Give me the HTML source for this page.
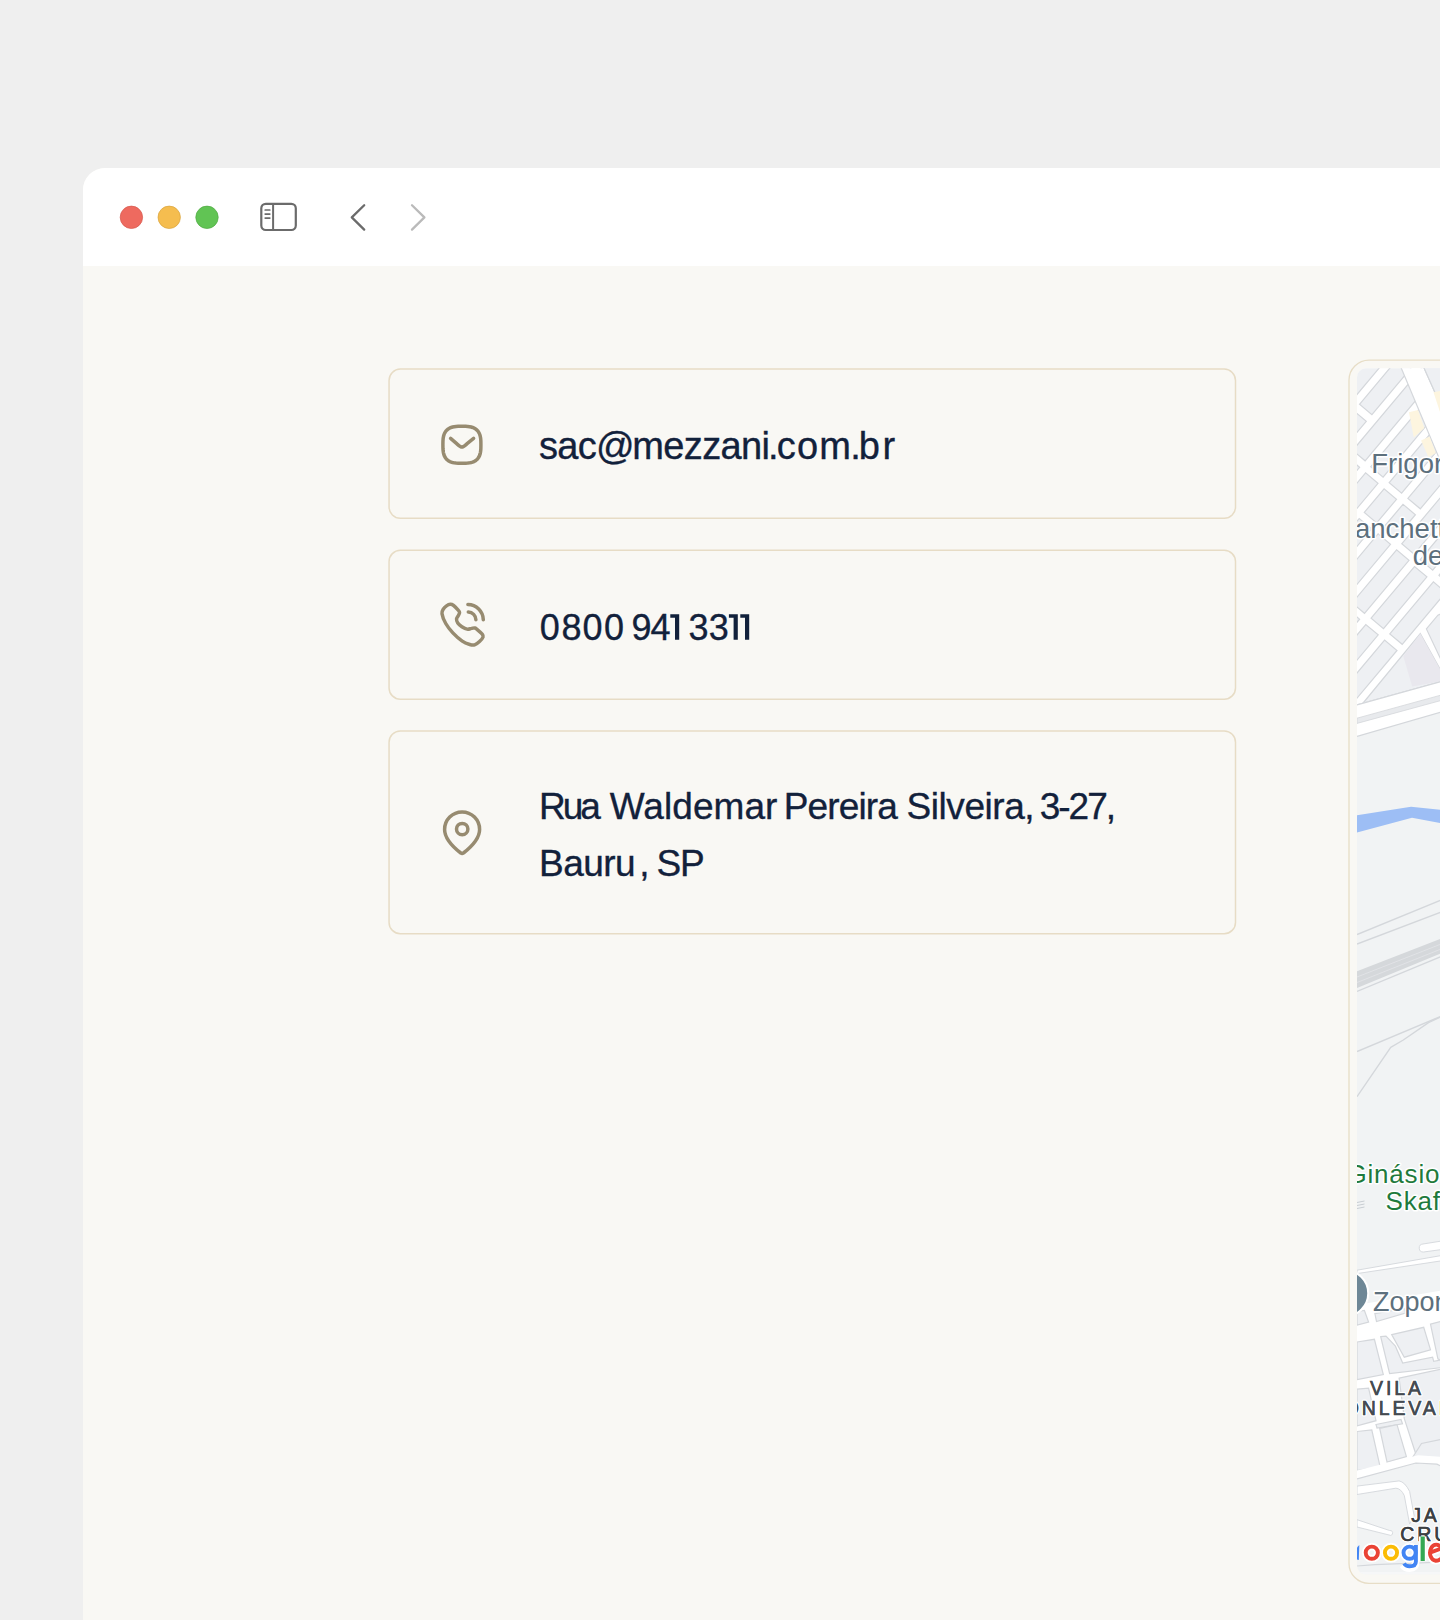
<!DOCTYPE html>
<html>
<head>
<meta charset="utf-8">
<style>
html,body{margin:0;padding:0;}
body{width:1440px;height:1620px;overflow:hidden;background:#efefef;position:relative;font-family:"Liberation Sans",sans-serif;}
.win{position:absolute;left:82.5px;top:168px;width:1400px;height:1500px;background:#f9f8f4;border-radius:22px 0 0 0;overflow:hidden;}
.bar{position:absolute;left:0;top:0;right:0;height:97.8px;background:#ffffff;}
svg{position:absolute;left:0;top:0;}
</style>
</head>
<body>
<div class="win"><div class="bar"></div></div>

<svg width="1440" height="1620" viewBox="0 0 1440 1620">
  <!-- cards -->
  <g fill="none" stroke="#e7dcc5" stroke-width="1.5">
    <rect x="389.06" y="369.1" width="846.44" height="149.2" rx="11.3" ry="11.3"/>
    <rect x="389.06" y="550.3" width="846.44" height="148.9" rx="11.3" ry="11.3"/>
    <rect x="389.06" y="731.0" width="846.44" height="202.7" rx="11.3" ry="11.3"/>
  </g>
  <!-- traffic lights -->
  <circle cx="131.4" cy="217.3" r="11.2" fill="#ee6a5f" stroke="#d5574c" stroke-width="0.7"/>
  <circle cx="169.2" cy="217.3" r="11.2" fill="#f5bd4f" stroke="#d9a33c" stroke-width="0.7"/>
  <circle cx="207" cy="217.3" r="11.2" fill="#61c454" stroke="#4fa942" stroke-width="0.7"/>
  <!-- sidebar icon -->
  <rect x="261.3" y="203.8" width="34.5" height="26.2" rx="4.5" fill="none" stroke="#6b6b6b" stroke-width="2.2"/>
  <line x1="273.1" y1="204" x2="273.1" y2="230" stroke="#6b6b6b" stroke-width="2"/>
  <line x1="265.2" y1="210" x2="269.8" y2="210" stroke="#6b6b6b" stroke-width="1.7" stroke-linecap="round"/>
  <line x1="265.2" y1="214.1" x2="269.8" y2="214.1" stroke="#6b6b6b" stroke-width="1.7" stroke-linecap="round"/>
  <line x1="265.2" y1="218.1" x2="269.8" y2="218.1" stroke="#6b6b6b" stroke-width="1.7" stroke-linecap="round"/>
  <!-- chevrons -->
  <polyline points="364.2,205.2 351.8,217.4 364.2,229.6" fill="none" stroke="#6b6b6b" stroke-width="2.3" stroke-linecap="round" stroke-linejoin="round"/>
  <polyline points="412,205.2 424.4,217.4 412,229.6" fill="none" stroke="#bababa" stroke-width="2.3" stroke-linecap="round" stroke-linejoin="round"/>
  <!-- icons -->
  <g fill="none" stroke="#978b70" stroke-width="3.5" stroke-linecap="round" stroke-linejoin="round">
    <path d="M480.90 444.80 L480.85 448.44 L480.71 450.56 L480.47 452.31 L480.13 453.85 L479.69 455.22 L479.16 456.45 L478.53 457.57 L477.81 458.58 L476.98 459.48 L476.05 460.29 L475.02 461.00 L473.87 461.61 L472.60 462.13 L471.19 462.55 L469.62 462.88 L467.81 463.11 L465.63 463.25 L461.90 463.30 L458.17 463.25 L455.99 463.11 L454.18 462.88 L452.61 462.55 L451.20 462.13 L449.93 461.61 L448.78 461.00 L447.75 460.29 L446.82 459.48 L445.99 458.58 L445.27 457.57 L444.64 456.45 L444.11 455.22 L443.67 453.85 L443.33 452.31 L443.09 450.56 L442.95 448.44 L442.90 444.80 L442.95 441.16 L443.09 439.04 L443.33 437.29 L443.67 435.75 L444.11 434.38 L444.64 433.15 L445.27 432.03 L445.99 431.02 L446.82 430.12 L447.75 429.31 L448.78 428.60 L449.93 427.99 L451.20 427.47 L452.61 427.05 L454.18 426.72 L455.99 426.49 L458.17 426.35 L461.90 426.30 L465.63 426.35 L467.81 426.49 L469.62 426.72 L471.19 427.05 L472.60 427.47 L473.87 427.99 L475.02 428.60 L476.05 429.31 L476.98 430.12 L477.81 431.02 L478.53 432.03 L479.16 433.15 L479.69 434.38 L480.13 435.75 L480.47 437.29 L480.71 439.04 L480.85 441.16 Z"/>
    <path d="M450.6 438.4 L456.4 443.4 C459.4 446.0 460.4 447.0 461.9 447.0 C463.4 447.0 464.4 446.0 467.4 443.4 L473.6 438.4"/>
    <path d="M450.25 604.37 C451.44 604.31 452.37 604.62 453.62 605.50 C454.87 606.37 456.76 608.47 457.75 609.62 C458.74 610.78 459.46 611.44 459.55 612.44 C459.64 613.44 458.81 614.53 458.31 615.62 C457.81 616.72 456.64 617.75 456.55 619.00 C456.46 620.25 456.86 621.84 457.75 623.12 C458.64 624.41 460.31 625.69 461.87 626.69 C463.44 627.69 465.50 628.84 467.12 629.12 C468.75 629.41 470.31 628.56 471.62 628.37 C472.94 628.19 474.00 627.75 475.00 628.00 C476.00 628.25 476.44 628.87 477.62 629.87 C478.81 630.87 481.22 632.81 482.12 634.00 C483.03 635.19 483.50 635.75 483.06 637.00 C482.62 638.25 480.91 640.19 479.50 641.50 C478.09 642.81 476.25 644.37 474.62 644.87 C473.00 645.37 471.81 645.12 469.75 644.50 C467.69 643.87 465.06 643.06 462.25 641.12 C459.44 639.19 455.62 635.81 452.87 632.87 C450.12 629.94 447.56 626.69 445.75 623.50 C443.94 620.31 442.37 616.19 442.00 613.75 C441.62 611.31 442.75 610.19 443.50 608.87 C444.25 607.56 445.37 606.62 446.50 605.87 C447.62 605.12 449.06 604.44 450.25 604.37 Z"/>
    <path d="M467.9 604.5 A15.6 15.6 0 0 1 483.3 619.8"/>
    <path d="M468.3 612.1 A7.7 7.7 0 0 1 475.9 619.8"/>
    <path d="M479.6 829.4 C479.6 839.4 467.48 849.8 463.41 853 Q462.1 854.1 460.79 853 C456.72 849.8 444.6 839.4 444.6 829.4 A17.5 17.5 0 0 1 479.6 829.4 Z"/>
    <circle cx="462.2" cy="829.1" r="5.7"/>
  </g>
</svg>
<!-- TEXT START -->
<svg width="1440" height="1620" viewBox="0 0 1440 1620" style="position:absolute;left:0;top:0;">
<g font-family="Liberation Sans" font-size="36" fill="#12213b" stroke="#12213b" stroke-width="0.35">
<text x="538.99" y="458.6" font-size="38" letter-spacing="-0.648">sac</text>
<text x="595.98" y="458.6" font-size="38">@</text>
<text x="632.3" y="458.6" font-size="38" letter-spacing="-0.625">mezzani</text>
<text x="767.99" y="458.6" font-size="38">.</text>
<text x="776.81" y="458.6" font-size="38" letter-spacing="1.21">com</text>
<text x="850.19" y="458.6" font-size="38">.</text>
<text x="858.77" y="458.6" font-size="38" letter-spacing="2.657">br</text>
<text x="539.11" y="818.8" font-size="37" letter-spacing="-3.047">Rua</text>
<text x="609.69" y="818.8" font-size="37" letter-spacing="0.066">Waldemar</text>
<text x="783.81" y="818.8" font-size="37" letter-spacing="-0.881">Pereira</text>
<text x="906.58" y="818.8" font-size="37" letter-spacing="-0.45">Silveira,</text>
<text x="1039.66" y="818.8" font-size="37" letter-spacing="-1.967">3-27,</text>
<text x="539.01" y="875.7" font-size="37" letter-spacing="-0.532">Bauru</text>
<text x="639.19" y="875.7" font-size="37">,</text>
<text x="656.38" y="875.7" font-size="37" letter-spacing="-1.149">SP</text>
<text x="539.8" y="639.8" font-size="36">0</text>
<text x="561.4" y="639.8" font-size="36">8</text>
<text x="582.6" y="639.8" font-size="36">0</text>
<text x="604.0" y="639.8" font-size="36">0</text>
<text x="631.45" y="639.8" font-size="36">9</text>
<text x="650.44" y="639.8" font-size="36">4</text>
<text x="688.57" y="639.8" font-size="36">3</text>
<text x="708.67" y="639.8" font-size="36">3</text>
<path d="M670.30 614.2 H679.20 V639.7 H675.00 V617.8 H670.30 Z" stroke="none"/>
<path d="M728.90 614.2 H737.80 V639.7 H733.60 V617.8 H728.90 Z" stroke="none"/>
<path d="M740.30 614.2 H749.20 V639.7 H745.00 V617.8 H740.30 Z" stroke="none"/>
</g>
</svg>
<!-- TEXT END -->
<!-- MAP START -->
<svg width="1440" height="1620" viewBox="0 0 1440 1620" style="position:absolute;left:0;top:0;font-family:'Liberation Sans',sans-serif;">
<defs>
<clipPath id="mapclip"><rect x="1357" y="368.3" width="120" height="1206.1" rx="9" ry="9"/></clipPath>
<clipPath id="upclip"><polygon points="1357,368 1445,368 1445,680.6 1357,704.8"/></clipPath>
</defs>
<rect x="1349" y="360.1" width="150" height="1223.3" rx="20" ry="20" fill="none" stroke="#e7ddc6" stroke-width="1.3"/>
<g clip-path="url(#mapclip)">
<rect x="1357.0" y="368.3" width="88.0" height="1206.1000000000001" fill="#f1f3f4"/>
<polygon points="1357,368 1445,368 1445,680.6 1357,704.8" fill="#ffffff"/>
<g clip-path="url(#upclip)">
<polygon points="1312.4,422.4 1428.1,284.5 1440.5,295.0 1324.8,432.8" fill="#eef0f3" stroke="#d4d7db" stroke-width="1.2" />
<polygon points="1318.2,453.4 1353.9,410.9 1366.3,421.3 1330.7,463.9" fill="#eef0f3" stroke="#d4d7db" stroke-width="1.2" />
<polygon points="1359.5,404.3 1446.8,300.2 1459.2,310.6 1371.9,414.7" fill="#eef0f3" stroke="#d4d7db" stroke-width="1.2" />
<polygon points="1298.4,515.1 1347.2,456.9 1359.6,467.3 1310.8,525.5" fill="#eef0f3" stroke="#d4d7db" stroke-width="1.2" />
<polygon points="1352.7,450.4 1465.5,315.9 1477.9,326.3 1365.1,460.8" fill="#eef0f3" stroke="#d4d7db" stroke-width="1.2" />
<polygon points="1317.1,530.8 1365.6,472.9 1378.0,483.3 1329.5,541.2" fill="#eef0f3" stroke="#d4d7db" stroke-width="1.2" />
<polygon points="1370.7,466.8 1484.2,331.6 1496.6,342.0 1383.1,477.2" fill="#eef0f3" stroke="#d4d7db" stroke-width="1.2" />
<polygon points="1335.8,546.5 1359.2,518.5 1371.6,528.9 1348.2,556.9" fill="#eef0f3" stroke="#d4d7db" stroke-width="1.2" />
<polygon points="1364.3,512.4 1384.1,488.8 1396.5,499.3 1376.7,522.9" fill="#eef0f3" stroke="#d4d7db" stroke-width="1.2" />
<polygon points="1389.2,482.7 1502.9,347.3 1515.3,357.7 1401.6,493.1" fill="#eef0f3" stroke="#d4d7db" stroke-width="1.2" />
<polygon points="1341.6,577.5 1378.1,533.9 1390.5,544.4 1354.0,587.9" fill="#eef0f3" stroke="#d4d7db" stroke-width="1.2" />
<polygon points="1383.1,528.0 1403.0,504.3 1415.4,514.7 1395.5,538.5" fill="#eef0f3" stroke="#d4d7db" stroke-width="1.2" />
<polygon points="1407.9,498.4 1521.6,363.0 1534.0,373.4 1420.3,508.8" fill="#eef0f3" stroke="#d4d7db" stroke-width="1.2" />
<polygon points="1302.4,662.1 1347.2,608.8 1359.6,619.2 1314.8,672.5" fill="#eef0f3" stroke="#d4d7db" stroke-width="1.2" />
<polygon points="1352.1,602.9 1396.6,549.9 1409.0,560.3 1364.5,613.3" fill="#eef0f3" stroke="#d4d7db" stroke-width="1.2" />
<polygon points="1401.7,543.8 1540.3,378.6 1552.7,389.1 1414.1,554.2" fill="#eef0f3" stroke="#d4d7db" stroke-width="1.2" />
<polygon points="1321.1,677.8 1365.8,624.5 1378.2,634.9 1333.5,688.2" fill="#eef0f3" stroke="#d4d7db" stroke-width="1.2" />
<polygon points="1371.1,618.2 1414.5,566.5 1426.9,576.9 1383.5,628.7" fill="#eef0f3" stroke="#d4d7db" stroke-width="1.2" />
<polygon points="1420.2,559.6 1559.0,394.3 1571.4,404.7 1432.7,570.1" fill="#eef0f3" stroke="#d4d7db" stroke-width="1.2" />
<polygon points="1339.8,693.5 1384.6,640.1 1397.0,650.5 1352.2,703.9" fill="#eef0f3" stroke="#d4d7db" stroke-width="1.2" />
<polygon points="1389.8,633.9 1433.4,581.9 1445.8,592.3 1402.2,644.3" fill="#eef0f3" stroke="#d4d7db" stroke-width="1.2" />
<polygon points="1438.9,575.3 1577.6,410.0 1590.1,420.4 1451.3,585.7" fill="#eef0f3" stroke="#d4d7db" stroke-width="1.2" />
<polygon points="1397.0,358.0 1419.6,358.0 1445.0,414.9 1445.0,472.2" fill="#ffffff" stroke="none" stroke-width="0" />
<polyline points="1397.0,358.0 1445.0,472.2" fill="none" stroke="#d4d7db" stroke-width="1.2" stroke-linejoin="round"/>
<polyline points="1419.6,358.0 1445.0,414.9" fill="none" stroke="#d4d7db" stroke-width="1.2" stroke-linejoin="round"/>
<polygon points="1419.6,358.0 1445.0,358.0 1445.0,414.9" fill="#eef0f3" stroke="#d4d7db" stroke-width="1.2" />
<polygon points="1362.3,704.0 1420.3,633.6 1445.0,677.9 1445.0,680.6 1357.0,704.8" fill="#eef0f3" stroke="#d4d7db" stroke-width="1.2" />
<polygon points="1403.3,656.2 1420.3,633.6 1445.0,677.9 1445.0,680.6 1412.2,686.5" fill="#e9e8ee" stroke="none" stroke-width="0" />
<polygon points="1426.4,628.9 1437.9,615.2 1445.0,612.0 1445.0,668.3" fill="#eef0f3" stroke="#d4d7db" stroke-width="1.2" />
<polygon points="1409.0,412.2 1418.0,410.1 1424.3,428.0 1413.8,437.4" fill="#fdf5df" stroke="none" stroke-width="0" />
<polygon points="1421.1,440.6 1429.5,436.4 1435.8,453.1 1428.5,457.3" fill="#fdf5df" stroke="none" stroke-width="0" />
<polygon points="1433.5,392.3 1445.0,390.0 1445.0,412.0 1440.0,412.0" fill="#fdf5df" stroke="none" stroke-width="0" />
</g>
<polygon points="1357.0,704.8 1445.0,680.6 1445.0,711.0 1357.0,736.3" fill="#ffffff" stroke="none" stroke-width="0" />
<polyline points="1357.0,704.8 1445.0,680.6" fill="none" stroke="#d4d7db" stroke-width="1.2" stroke-linejoin="round"/>
<polyline points="1357.0,736.3 1445.0,711.0" fill="none" stroke="#d4d7db" stroke-width="1.2" stroke-linejoin="round"/>
<polygon points="1357.0,718.2 1445.0,694.0 1445.0,699.4 1357.0,723.4" fill="#e8eaed" stroke="#d4d7db" stroke-width="0.8" />
<polygon points="1357.0,815.3 1411.0,806.7 1445.0,810.2 1445.0,823.8 1412.0,817.8 1357.0,832.5" fill="#9dbef5" stroke="none" stroke-width="0" />
<polyline points="1357.0,934.6 1445.0,898.5" fill="none" stroke="#d4d7db" stroke-width="1.4" stroke-linejoin="round"/>
<polyline points="1357.0,944.0 1445.0,910.5" fill="none" stroke="#d4d7db" stroke-width="1.4" stroke-linejoin="round"/>
<polygon points="1357.0,971.3 1445.0,937.0 1445.0,951.8 1357.0,988.1" fill="#d5d8db" stroke="none" stroke-width="0" />
<polyline points="1357.0,977.0 1445.0,942.5" fill="none" stroke="#e3e5e8" stroke-width="0.8" stroke-linejoin="round"/>
<polyline points="1357.0,982.5 1445.0,947.5" fill="none" stroke="#e3e5e8" stroke-width="0.8" stroke-linejoin="round"/>
<polyline points="1357.0,991.4 1445.0,955.0" fill="none" stroke="#d4d7db" stroke-width="1.4" stroke-linejoin="round"/>
<polyline points="1357.0,1051.6 1445.0,1014.6" fill="none" stroke="#d4d7db" stroke-width="1.4" stroke-linejoin="round"/>
<polyline points="1357.0,1096.7 1390.7,1047.3 1403.3,1040.0 1428.5,1022.7 1445.0,1015.0" fill="none" stroke="#d4d7db" stroke-width="1.4" stroke-linejoin="round"/>
<path d="M1445 1240.5 L1423 1244 A4 4 0 0 0 1423.5 1252 L1445 1249.1" fill="#ffffff" stroke="#d4d7db" stroke-width="0.9"/>
<polygon points="1357.0,1270.2 1445.0,1254.9 1445.0,1260.3 1357.0,1273.6" fill="#ffffff" stroke="#d4d7db" stroke-width="0.9" />
<polygon points="1357,1305 1445,1290 1445,1468 1436.8,1464.1 1415.9,1463 1357,1478.8" fill="#ffffff"/>
<polygon points="1357.0,1311.5 1364.4,1310.5 1368.6,1322.0 1357.0,1325.2" fill="#eef0f3" stroke="#d4d7db" stroke-width="1.2" />
<polygon points="1374.9,1313.6 1404.3,1308.4 1405.4,1313.1 1376.5,1321.5" fill="#eef0f3" stroke="#d4d7db" stroke-width="1.2" />
<polygon points="1430.5,1324.1 1445.0,1320.5 1445.0,1363.0 1437.9,1358.8" fill="#eef0f3" stroke="#d4d7db" stroke-width="1.2" />
<polygon points="1357.0,1342.0 1374.4,1339.3 1383.3,1374.5 1357.0,1379.7" fill="#eef0f3" stroke="#d4d7db" stroke-width="1.2" />
<polygon points="1380.7,1336.7 1386.0,1336.2 1395.4,1346.2 1402.7,1363.0 1432.6,1357.2 1433.7,1361.4 1445.0,1359.3 1445.0,1367.2 1389.6,1373.5" fill="#eef0f3" stroke="#d4d7db" stroke-width="1.2" />
<polygon points="1391.7,1334.6 1423.7,1327.3 1430.5,1349.8 1404.3,1357.2" fill="#eef0f3" stroke="#d4d7db" stroke-width="1.2" />
<polygon points="1399.1,1378.2 1445.0,1368.3 1445.0,1439.6 1422.2,1444.8 1415.9,1454.3 1404.3,1418.6" fill="#eef0f3" stroke="#d4d7db" stroke-width="1.2" />
<polygon points="1357.0,1389.2 1368.6,1388.1 1376.0,1420.7 1357.0,1425.9" fill="#eef0f3" stroke="#d4d7db" stroke-width="1.2" />
<polygon points="1376.0,1424.5 1401.0,1419.5 1402.5,1423.8 1377.0,1428.0" fill="#eef0f3" stroke="#d4d7db" stroke-width="1.2" />
<polygon points="1357.0,1431.5 1371.8,1430.0 1380.2,1467.2 1364.4,1469.3 1357.0,1470.5" fill="#eef0f3" stroke="#d4d7db" stroke-width="1.2" />
<polygon points="1379.7,1428.4 1397.0,1424.7 1406.4,1456.7 1387.0,1462.0" fill="#eef0f3" stroke="#d4d7db" stroke-width="1.2" />
<polygon points="1412.5,1457.5 1421.5,1443.5 1445.0,1438.5 1445.0,1460.0 1415.9,1463.0" fill="#eef0f3" stroke="#d4d7db" stroke-width="1.2" />
<polygon points="1357.0,1470.5 1418.0,1455.2 1445.0,1457.0 1445.0,1466.5 1436.8,1464.1 1415.9,1463.0 1357.0,1478.8" fill="#ffffff" stroke="none" stroke-width="0" />
<polyline points="1357.0,1478.8 1415.9,1463.0 1436.8,1464.1 1445.0,1468.0" fill="none" stroke="#d4d7db" stroke-width="1.2" stroke-linejoin="round"/>
<path d="M1357 1486.1 L1399.1 1480.9 Q1405 1482 1409.6 1491.4 L1414.2 1516 L1409.6 1524 L1404.3 1495.6 Q1401 1488.5 1395.9 1488.2 L1357 1494.5 Z" fill="#ffffff" stroke="#d4d7db" stroke-width="0.9"/>
<path d="M1357 1519.7 L1389.6 1530.5 A2.5 2.5 0 0 1 1390.7 1535.4 L1357 1527 Z" fill="#ffffff" stroke="#d4d7db" stroke-width="0.9"/>
<path d="M1357 1566 L1375 1564.7 L1445 1562" fill="none" stroke="#d4d7db" stroke-width="1.2"/>
<path d="M1357 1572 L1445 1572 L1445 1574.4 L1357 1574.4 Z" fill="#f6f7f8"/>
<text x="1371.3" y="472.6" font-size="27.5" fill="#5d707d" stroke="#ffffff" stroke-width="3.0" paint-order="stroke" stroke-linejoin="round" letter-spacing="0" font-weight="normal" >Frigorífico</text>
<text x="1330.5" y="537.6" font-size="27.5" fill="#5d707d" stroke="#ffffff" stroke-width="3.0" paint-order="stroke" stroke-linejoin="round" letter-spacing="0" font-weight="normal" >Blanchetti</text>
<text x="1412.8" y="565.4" font-size="27.5" fill="#5d707d" stroke="#ffffff" stroke-width="3.0" paint-order="stroke" stroke-linejoin="round" letter-spacing="0" font-weight="normal" >de</text>
<text x="1346.5" y="1182.6" font-size="26" fill="#1e7a3c" stroke="#ffffff" stroke-width="3.0" paint-order="stroke" stroke-linejoin="round" letter-spacing="0.8" font-weight="normal" >Ginásio</text>
<text x="1385.5" y="1209.8" font-size="26" fill="#1e7a3c" stroke="#ffffff" stroke-width="3.0" paint-order="stroke" stroke-linejoin="round" letter-spacing="0.8" font-weight="normal" >Skaf</text>
<text x="1373.0" y="1311.1" font-size="27" fill="#5d707d" stroke="#ffffff" stroke-width="3.0" paint-order="stroke" stroke-linejoin="round" letter-spacing="0" font-weight="normal" >Zopone</text>
<text x="1370.0" y="1395.0" font-size="19.5" fill="#454b52" stroke="#ffffff" stroke-width="3" paint-order="stroke" stroke-linejoin="round" letter-spacing="2.9" font-weight="normal" >VILA</text>
<text x="1370.0" y="1395.0" font-size="19.5" fill="#454b52" stroke="#454b52" stroke-width="0.5" letter-spacing="2.9" font-weight="normal" >VILA</text>
<text x="1324.5" y="1414.9" font-size="19.5" fill="#454b52" stroke="#ffffff" stroke-width="3" paint-order="stroke" stroke-linejoin="round" letter-spacing="2.9" font-weight="normal" >MONLEVADE</text>
<text x="1324.5" y="1414.9" font-size="19.5" fill="#454b52" stroke="#454b52" stroke-width="0.5" letter-spacing="2.9" font-weight="normal" >MONLEVADE</text>
<text x="1411.2" y="1521.8" font-size="19.5" fill="#3c4043" stroke="#ffffff" stroke-width="3" paint-order="stroke" stroke-linejoin="round" letter-spacing="2.9" font-weight="normal" >JARDIM</text>
<text x="1411.2" y="1521.8" font-size="19.5" fill="#3c4043" stroke="#3c4043" stroke-width="0.5" letter-spacing="2.9" font-weight="normal" >JARDIM</text>
<text x="1400.2" y="1541.2" font-size="19.5" fill="#3c4043" stroke="#ffffff" stroke-width="3" paint-order="stroke" stroke-linejoin="round" letter-spacing="2.9" font-weight="normal" >CRUZEIRO</text>
<text x="1400.2" y="1541.2" font-size="19.5" fill="#3c4043" stroke="#3c4043" stroke-width="0.5" letter-spacing="2.9" font-weight="normal" >CRUZEIRO</text>
<circle cx="1345.2" cy="1293.3" r="23" fill="#6e8796" stroke="#ffffff" stroke-width="2"/>
<path d="M1357 1202.5 L1364.5 1201 M1357 1205.5 L1364.5 1204 M1357 1208.5 L1364.5 1207" stroke="#c8cdd2" stroke-width="1"/>
<g fill="none" stroke="#ffffff" stroke-width="7.5" stroke-linecap="butt"><circle cx="1371.8" cy="1552.7" r="6.1"/><circle cx="1391.0" cy="1552.7" r="6.1"/><circle cx="1409.6" cy="1552.7" r="6.1"/><path d="M1415.9 1545 L1415.9 1561.5 Q1415.9 1568 1409.5 1568.2 Q1405 1568.2 1403 1565"/><path d="M1422.7 1536.5 L1422.7 1561.1"/><path d="M1429.3 1552.9 L1441.5 1548.5 M1441 1558.5 Q1439 1560.8 1435.7 1560.8 A6.2 8.1 0 1 1 1441.5 1548.5"/></g>
<path d="M1352 1553 A8.3 8.3 0 0 0 1358.8 1560 L1359.3 1545 Z" fill="#4285f4"/>
<g fill="none" stroke-width="3.9"><circle cx="1371.8" cy="1552.7" r="6.1" stroke="#ea4335"/><circle cx="1391.0" cy="1552.7" r="6.1" stroke="#fbbc05"/><circle cx="1409.6" cy="1552.7" r="6.1" stroke="#4285f4"/><path d="M1415.9 1545 L1415.9 1561.5 Q1415.9 1566.3 1409.5 1566.3 Q1405.8 1566.3 1404 1563.5" stroke="#4285f4"/><path d="M1422.7 1536.5 L1422.7 1561.1" stroke="#34a853" stroke-width="4.2"/><path d="M1429.3 1552.9 L1441.5 1548.5 M1441 1558.5 Q1439 1560.8 1435.7 1560.8 A6.2 8.1 0 1 1 1441.5 1548.5" stroke="#ea4335"/></g>
</g>
</svg>
<!-- MAP END -->
</body>
</html>
